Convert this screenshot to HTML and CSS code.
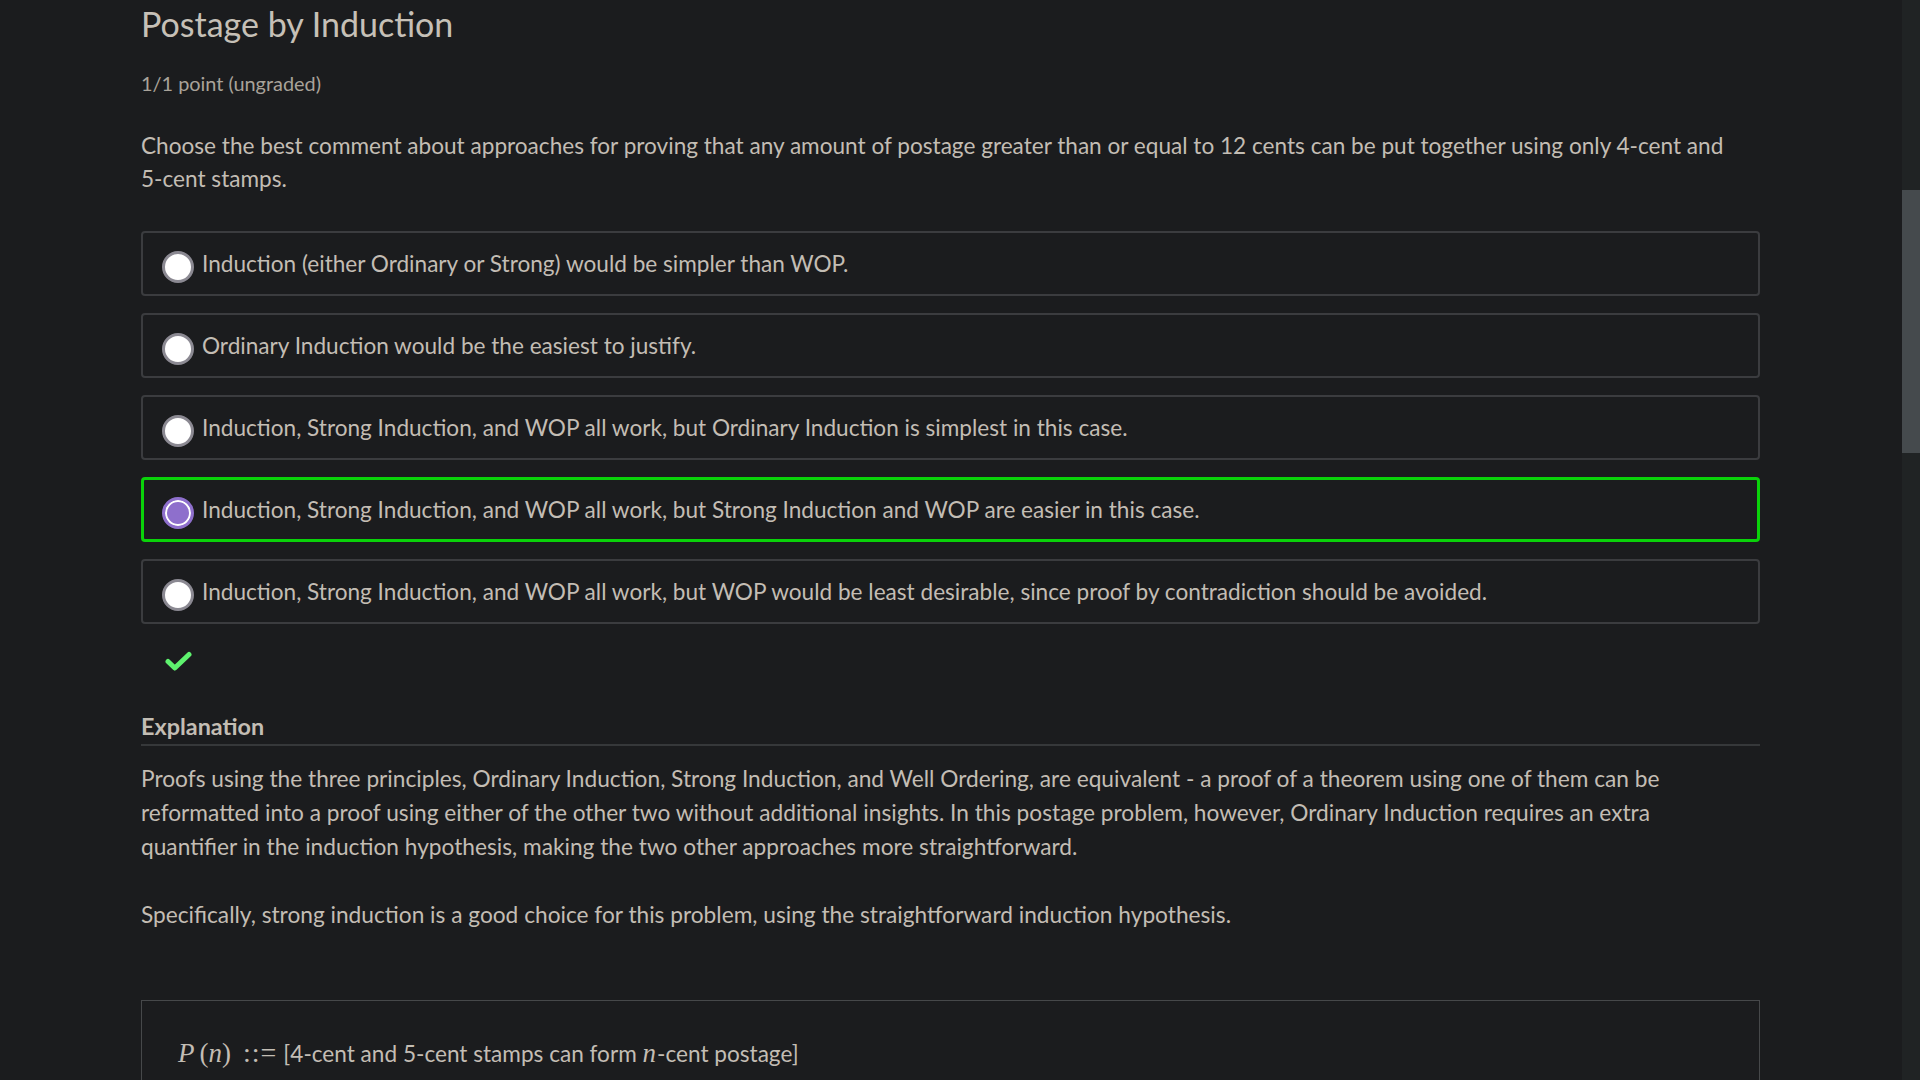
FILE: index.html
```html
<!DOCTYPE html>
<html lang="en">
<head>
<meta charset="utf-8">
<title>Postage by Induction</title>
<link rel="stylesheet" href="styles.css">
</head>
<body>
<main class="page">
  <h2 class="title">Postage by Induction</h2>
  <div class="meta">1/1 point (ungraded)</div>
  <p class="question">Choose the best comment about approaches for proving that any amount of postage greater than or equal to 12 cents can be put together using only 4-cent and <span class="nowrap">5-cent</span> stamps.</p>
  <div class="choices">
    <label class="choice"><span class="radio"></span><span class="choice-text">Induction (either Ordinary or Strong) would be simpler than WOP.</span></label>
    <label class="choice"><span class="radio"></span><span class="choice-text">Ordinary Induction would be the easiest to justify.</span></label>
    <label class="choice"><span class="radio"></span><span class="choice-text">Induction, Strong Induction, and WOP all work, but Ordinary Induction is simplest in this case.</span></label>
    <label class="choice correct"><span class="radio checked"></span><span class="choice-text">Induction, Strong Induction, and WOP all work, but Strong Induction and WOP are easier in this case.</span></label>
    <label class="choice"><span class="radio"></span><span class="choice-text">Induction, Strong Induction, and WOP all work, but WOP would be least desirable, since proof by contradiction should be avoided.</span></label>
  </div>
  <div class="status">
    <svg class="check" viewBox="0 0 27 21" width="27" height="21"><path d="M3 10.5 L9.8 17 L24 3.5" fill="none" stroke="#5ef26e" stroke-width="5" stroke-linecap="round" stroke-linejoin="round"/></svg>
  </div>
  <h3 class="expl-title">Explanation</h3>
  <p class="expl">Proofs using the three principles, Ordinary Induction, Strong Induction, and Well Ordering, are equivalent - a proof of a theorem using one of them can be reformatted into a proof using either of the other two without additional insights. In this postage problem, however, Ordinary Induction requires an extra quantifier in the induction hypothesis, making the two other approaches more straightforward.</p>
  <p class="expl">Specifically, strong induction is a good choice for this problem, using the straightforward induction hypothesis.</p>
  <div class="formula">
    <span class="math"><i class="var-p">P</i>(<i>n</i>)</span><span class="math defeq">::=</span>[4-cent and 5-cent stamps can form <i class="math var-n">n</i>-cent postage]
  </div>
</main>
<div class="scrollbar"><div class="thumb"></div></div>
</body>
</html>
```
FILE: styles.css
```css
html, body {
  margin: 0;
  padding: 0;
  background: #1b1c1e;
}
body {
  height: 100vh;
  overflow: hidden;
  font-family: "Lato", "Open Sans", sans-serif;
  color: #c3bdb4;
}
.page {
  width: 1619px;
  margin-left: 141px;
}
.nowrap {
  white-space: nowrap;
}
.title {
  margin: 2px 0 0;
  font-size: 34px;
  line-height: 44px;
  font-weight: 400;
  color: #c6c0b7;
}
.meta {
  margin-top: 23px;
  font-size: 19.9px;
  line-height: 28px;
  color: #a9a39a;
}
.question {
  margin: 32px 0 0;
  font-size: 22.6px;
  line-height: 33px;
}
.choices {
  margin-top: 36px;
  display: flex;
  flex-direction: column;
  gap: 17px;
}
.choice {
  height: 61px;
  display: flex;
  align-items: center;
  gap: 8px;
  padding-left: 19px;
  border: 2px solid #3b3c3f;
  border-radius: 4px;
  font-size: 22.6px;
}
.choice.correct {
  border: 3px solid #0ad20a;
  height: 59px;
  padding-left: 18px;
}
.radio {
  flex: none;
  width: 26px;
  height: 26px;
  margin-top: 6px;
  border-radius: 50%;
  background: #ffffff;
  border: 3px solid #8b8992;
}
.radio.checked {
  background: #8e6fcc;
  border-color: #8e6fcc;
  box-shadow: inset 0 0 0 2px #ffffff;
}
.status {
  height: 74px;
  padding-left: 24px;
  display: flex;
  align-items: center;
}
.expl-title {
  margin: 12px 0 0;
  font-size: 23.4px;
  line-height: 32px;
  font-weight: 700;
  padding-bottom: 2px;
  border-bottom: 2px solid #36383a;
}
.expl {
  margin: 16px 0 34px;
  padding-right: 40px;
  font-size: 22.7px;
  line-height: 34px;
}
.formula {
  margin-top: 68px;
  border: 1px solid #46484a;
  padding: 36px 36px;
  font-size: 22.6px;
}
.math {
  font-family: "Liberation Serif", serif;
  font-size: 27px;
}
.var-p {
  margin-right: 5px;
}
.defeq {
  margin-left: 12px;
  margin-right: 6px;
  letter-spacing: 1px;
  font-size: 28px;
}
.var-n {
  margin-right: 1px;
}
.scrollbar {
  position: fixed;
  top: 0;
  right: 0;
  width: 18px;
  height: 100vh;
  background: #202324;
}
.thumb {
  margin-top: 190px;
  height: 263px;
  background: #454a4d;
}
```
